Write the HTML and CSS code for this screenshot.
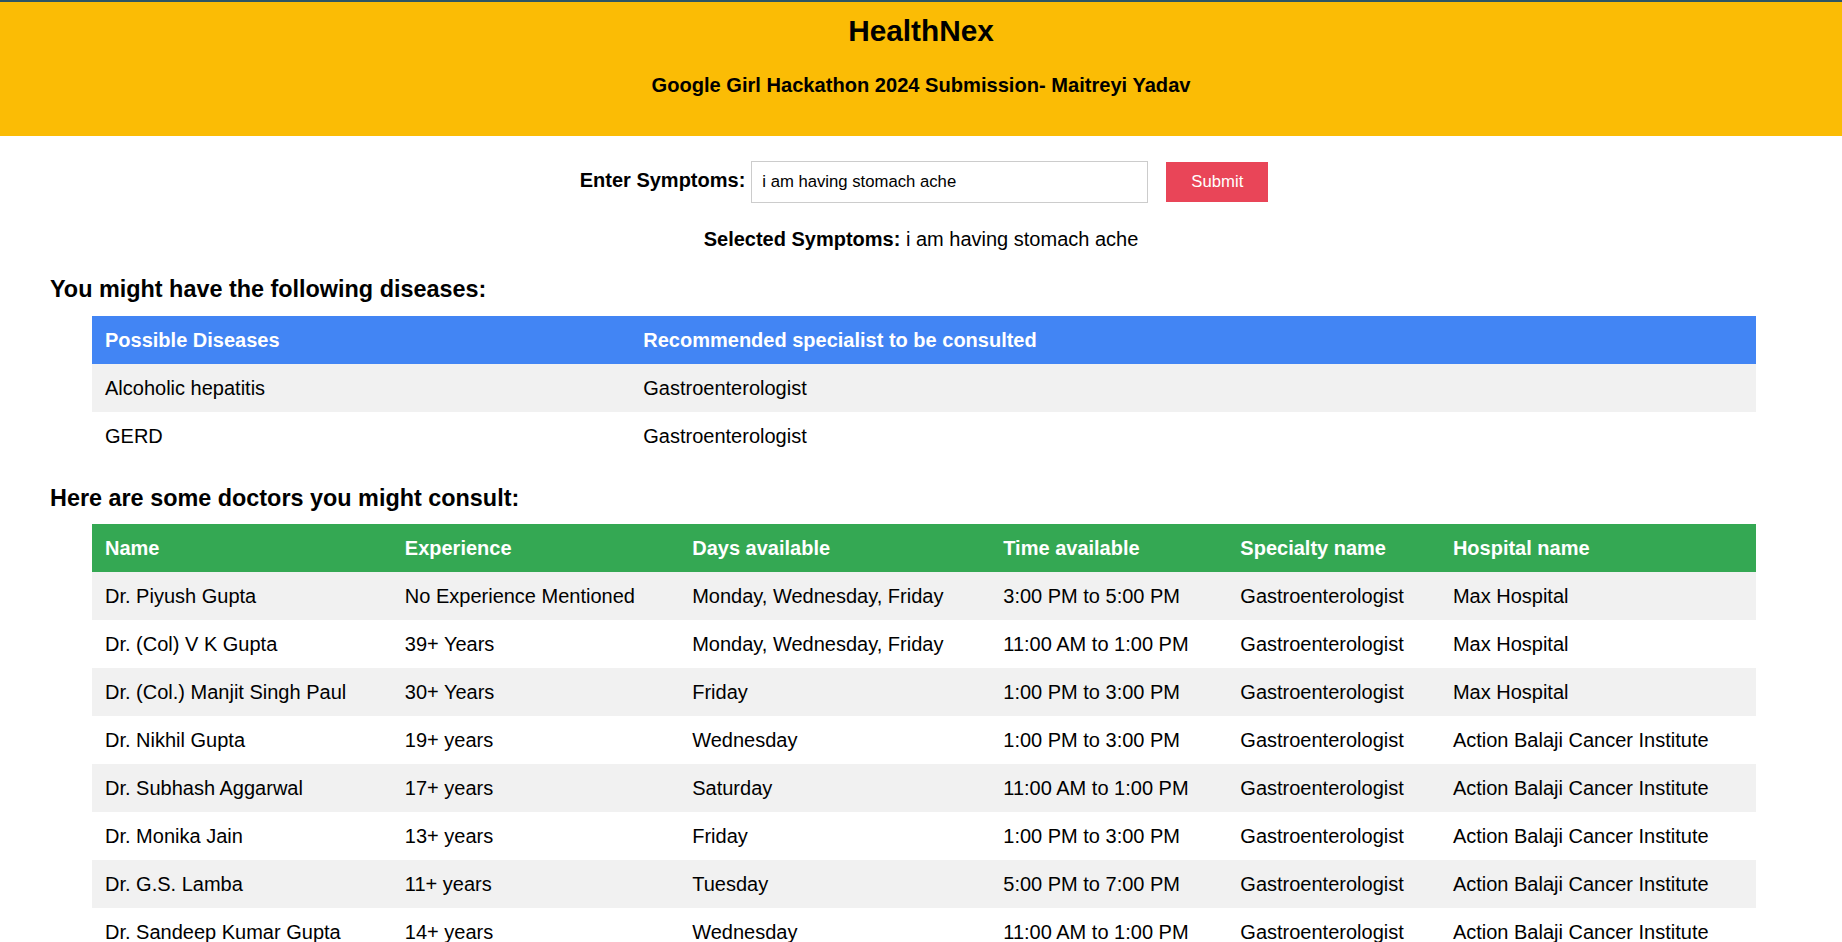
FILE: index.html
```html
<!DOCTYPE html>
<html lang="en">
<head>
<meta charset="utf-8">
<title>HealthNex</title>
<link rel="stylesheet" href="styles.css">
</head>
<body>
<header class="site-header">
  <h1 class="brand">HealthNex</h1>
  <h2 class="subtitle">Google Girl Hackathon 2024 Submission- Maitreyi Yadav</h2>
</header>
<main class="content">
  <form class="symptom-form">
    <label class="form-label" for="symptoms">Enter Symptoms:</label>
    <input class="symptom-input" id="symptoms" type="text" value="i am having stomach ache">
    <button class="submit-btn" type="button">Submit</button>
  </form>
  <p class="selected"><strong>Selected Symptoms:</strong> i am having stomach ache</p>

  <h3 class="section-title">You might have the following diseases:</h3>
  <table class="data-table diseases">
    <thead>
      <tr><th>Possible Diseases</th><th>Recommended specialist to be consulted</th></tr>
    </thead>
    <tbody>
      <tr><td>Alcoholic hepatitis</td><td>Gastroenterologist</td></tr>
      <tr><td>GERD</td><td>Gastroenterologist</td></tr>
    </tbody>
  </table>

  <h3 class="section-title second">Here are some doctors you might consult:</h3>
  <table class="data-table doctors">
    <thead>
      <tr><th>Name</th><th>Experience</th><th>Days available</th><th>Time available</th><th>Specialty name</th><th>Hospital name</th></tr>
    </thead>
    <tbody>
      <tr><td>Dr. Piyush Gupta</td><td>No Experience Mentioned</td><td>Monday, Wednesday, Friday</td><td>3:00 PM to 5:00 PM</td><td>Gastroenterologist</td><td>Max Hospital</td></tr>
      <tr><td>Dr. (Col) V K Gupta</td><td>39+ Years</td><td>Monday, Wednesday, Friday</td><td>11:00 AM to 1:00 PM</td><td>Gastroenterologist</td><td>Max Hospital</td></tr>
      <tr><td>Dr. (Col.) Manjit Singh Paul</td><td>30+ Years</td><td>Friday</td><td>1:00 PM to 3:00 PM</td><td>Gastroenterologist</td><td>Max Hospital</td></tr>
      <tr><td>Dr. Nikhil Gupta</td><td>19+ years</td><td>Wednesday</td><td>1:00 PM to 3:00 PM</td><td>Gastroenterologist</td><td>Action Balaji Cancer Institute</td></tr>
      <tr><td>Dr. Subhash Aggarwal</td><td>17+ years</td><td>Saturday</td><td>11:00 AM to 1:00 PM</td><td>Gastroenterologist</td><td>Action Balaji Cancer Institute</td></tr>
      <tr><td>Dr. Monika Jain</td><td>13+ years</td><td>Friday</td><td>1:00 PM to 3:00 PM</td><td>Gastroenterologist</td><td>Action Balaji Cancer Institute</td></tr>
      <tr><td>Dr. G.S. Lamba</td><td>11+ years</td><td>Tuesday</td><td>5:00 PM to 7:00 PM</td><td>Gastroenterologist</td><td>Action Balaji Cancer Institute</td></tr>
      <tr><td>Dr. Sandeep Kumar Gupta</td><td>14+ years</td><td>Wednesday</td><td>11:00 AM to 1:00 PM</td><td>Gastroenterologist</td><td>Action Balaji Cancer Institute</td></tr>
    </tbody>
  </table>
</main>
</body>
</html>
```

FILE: styles.css
```css
html, body {
  margin: 0;
  padding: 0;
  background: #ffffff;
  overflow: hidden;
}

body {
  font-family: "Liberation Sans", Arial, sans-serif;
  color: #000000;
}

.site-header {
  background: #fbbc05;
  border-top: 2px solid #2d5465;
  padding: 12px 0 39px;
  text-align: center;
}

.brand {
  margin: 0;
  font-size: 29.8px;
  line-height: 34px;
  font-weight: bold;
}

.subtitle {
  margin: 25px 0 0;
  font-size: 20.1px;
  line-height: 24px;
  font-weight: bold;
}

.content {
  padding: 0 50px;
}

.symptom-form {
  display: flex;
  justify-content: center;
  align-items: center;
  margin-top: 25px;
}

.form-label {
  font-size: 20px;
  font-weight: bold;
  margin: 0 6px 4px;
}

.symptom-input {
  box-sizing: border-box;
  width: 397px;
  height: 42px;
  border: 1px solid #cccccc;
  padding: 0 10px;
  font-family: "Liberation Sans", Arial, sans-serif;
  font-size: 16.7px;
  color: #000;
  outline: none;
}

.submit-btn {
  box-sizing: border-box;
  width: 102px;
  height: 40px;
  margin-left: 18px;
  border: none;
  background: #e94558;
  color: #ffffff;
  font-family: "Liberation Sans", Arial, sans-serif;
  font-size: 16.7px;
  cursor: pointer;
}

.selected {
  margin: 23.5px 0 0;
  text-align: center;
  font-size: 20px;
  line-height: 24px;
}

.section-title {
  margin: 24.5px 0 13px;
  font-size: 23.4px;
  line-height: 28px;
  font-weight: bold;
}

.section-title.second {
  margin: 24px 0 12px;
}

.data-table {
  border-collapse: collapse;
  width: calc(100% - 78px);
  margin-left: 42px;
  font-size: 20px;
}

.data-table th,
.data-table td {
  text-align: left;
  padding: 12px 13px;
  line-height: 24px;
  white-space: nowrap;
}

.data-table th {
  color: #ffffff;
  font-weight: bold;
}

.diseases thead tr {
  background: #4285f4;
}

.doctors thead tr {
  background: #34a853;
}

.data-table tbody tr:nth-child(odd) {
  background: #f1f1f1;
}

.data-table tbody tr:nth-child(even) {
  background: #ffffff;
}
```
